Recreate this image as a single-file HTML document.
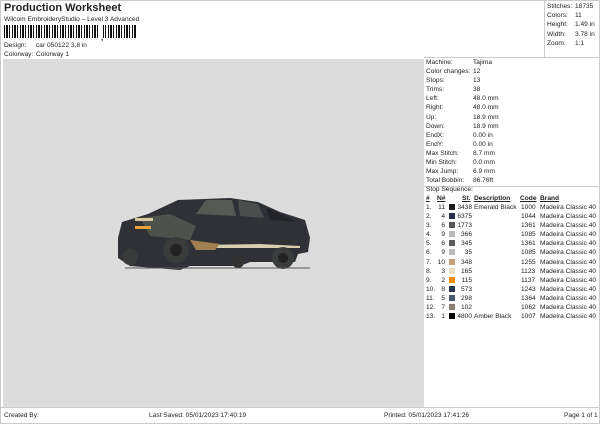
<!DOCTYPE html>
<html><head><meta charset="utf-8"><style>
*{margin:0;padding:0;box-sizing:border-box}
body{width:600px;height:424px;background:#fff;font-family:"Liberation Sans",sans-serif;font-size:6.6px;color:#222;position:relative;overflow:hidden}
.a{position:absolute;white-space:nowrap;line-height:9px}
.sw{display:inline-block;width:6px;height:6px;vertical-align:-1px}
</style></head><body>
<div style="position:absolute;left:0;top:0;width:600px;height:424px;border:1px solid #ccc"></div>
<div class="a" style="left:4px;top:2px;font-size:11px;font-weight:bold;line-height:12px">Production Worksheet</div>
<div class="a" style="left:4px;top:15px">Wilcom EmbroideryStudio – Level 3 Advanced</div>
<div class="a" style="left:4px;top:25px;width:133px;height:13px;background:repeating-linear-gradient(90deg,#111 0 1px,#fff 1px 2px,#111 2px 4px,#fff 4px 5px,#111 5px 6px,#fff 6px 8px)"></div>
<div class="a" style="left:100px;top:25px;width:3px;height:13px;background:#fff"></div>
<div class="a" style="left:101px;top:33px;font-weight:bold;font-size:8px">,</div>
<div class="a" style="left:4px;top:41px">Design:</div><div class="a" style="left:36px;top:41px">car 050122 3,8 in</div>
<div class="a" style="left:4px;top:50px">Colorway:</div><div class="a" style="left:36px;top:50px">Colorway 1</div>
<div style="position:absolute;left:3px;top:59px;width:421px;height:348px;background:#dcdcdc"></div>
<div style="position:absolute;left:424px;top:57px;width:176px;height:1px;background:#ccc"></div>
<div style="position:absolute;left:544px;top:0;width:1px;height:57px;background:#ccc"></div>
<div style="position:absolute;left:0;top:407px;width:600px;height:1px;background:#ccc"></div>
<div style="position:absolute;left:424px;top:186px;width:176px;height:1px;background:#ccc"></div>
<div class="a" style="left:547px;top:2px;line-height:9.2px">Stitches:<br>Colors:<br>Height:<br>Width:<br>Zoom:</div>
<div class="a" style="left:575px;top:2px;line-height:9.2px">18735<br>11<br>1.49 in<br>3.78 in<br>1:1</div>
<div class="a" style="left:426px;top:58px;line-height:9.1px">Machine:<br>Color changes:<br>Stops:<br>Trims:<br>Left:<br>Right:<br>Up:<br>Down:<br>EndX:<br>EndY:<br>Max Stitch:<br>Min Stitch:<br>Max Jump:<br>Total Bobbin:<br>Stop Sequence:</div>
<div class="a" style="left:473px;top:58px;line-height:9.1px">Tajima<br>12<br>13<br>38<br>48.0 mm<br>48.0 mm<br>18.9 mm<br>18.9 mm<br>0.00 in<br>0.00 in<br>8.7 mm<br>0.0 mm<br>6.9 mm<br>86.76ft</div>
<div class="a" style="left:426px;top:194px;font-weight:bold;text-decoration:underline">#</div>
<div class="a" style="left:437px;top:194px;font-weight:bold;text-decoration:underline">N#</div>
<div class="a" style="left:462px;top:194px;font-weight:bold;text-decoration:underline">St.</div>
<div class="a" style="left:474px;top:194px;font-weight:bold;text-decoration:underline">Description</div>
<div class="a" style="left:520px;top:194px;font-weight:bold;text-decoration:underline">Code</div>
<div class="a" style="left:540px;top:194px;font-weight:bold;text-decoration:underline">Brand</div>
<div class="a" style="left:426px;top:203px;line-height:9.1px">1.<br>2.<br>3.<br>4.<br>5.<br>6.<br>7.<br>8.<br>9.<br>10.<br>11.<br>12.<br>13.</div>
<div class="a" style="left:436px;top:203px;line-height:9.1px;text-align:right;width:9px">11<br>4<br>6<br>9<br>6<br>9<br>10<br>3<br>2<br>8<br>5<br>7<br>1</div>
<div class="a" style="left:449px;top:203px;line-height:9.1px">
<span class="sw" style="background:#1a1a1a"></span><br><span class="sw" style="background:#2a2d40"></span><br><span class="sw" style="background:#555"></span><br><span class="sw" style="background:#bbb"></span><br><span class="sw" style="background:#5a5a5a"></span><br><span class="sw" style="background:#bbb"></span><br><span class="sw" style="background:#c8a078"></span><br><span class="sw" style="background:#ece0c4"></span><br><span class="sw" style="background:#f08c10"></span><br><span class="sw" style="background:#2a3550"></span><br><span class="sw" style="background:#4a5a70"></span><br><span class="sw" style="background:#8a8070"></span><br><span class="sw" style="background:#000"></span></div>
<div class="a" style="left:456px;top:203px;line-height:9.1px;text-align:right;width:16px">3438<br>6375<br>1773<br>366<br>345<br>35<br>348<br>165<br>115<br>573<br>298<br>102<br>4800</div>
<div class="a" style="left:474px;top:203px;line-height:9.1px">Emerald Black<br><br><br><br><br><br><br><br><br><br><br><br>Amber Black</div>
<div class="a" style="left:521px;top:203px;line-height:9.1px">1000<br>1044<br>1361<br>1085<br>1361<br>1085<br>1255<br>1123<br>1137<br>1243<br>1364<br>1062<br>1007</div>
<div class="a" style="left:540px;top:203px;line-height:9.1px">Madeira Classic 40<br>Madeira Classic 40<br>Madeira Classic 40<br>Madeira Classic 40<br>Madeira Classic 40<br>Madeira Classic 40<br>Madeira Classic 40<br>Madeira Classic 40<br>Madeira Classic 40<br>Madeira Classic 40<br>Madeira Classic 40<br>Madeira Classic 40<br>Madeira Classic 40</div>
<svg style="position:absolute;left:0;top:0" width="600" height="424">
<path d="M118,238 L122,222 L148,214 L178,200 L230,198 L258,202 L280,212 L305,220 L310,238 L308,252 L298,254 L295,262 L250,262 L240,266 L190,266 L180,270 L130,266 L118,258 Z" fill="#2f3136"/>
<path d="M196,214 L206,200 L232,200 L236,216 Z" fill="#555a55"/>
<path d="M238,200 L258,204 L264,218 L240,216 Z" fill="#4a4e4c"/>
<path d="M266,208 L282,214 L296,222 L270,220 Z" fill="#222428"/>
<path d="M140,218 L170,214 L196,226 L190,240 L150,236 Z" fill="#4d524d"/>
<rect x="135" y="218" width="18" height="3" fill="#d9c9a0"/>
<rect x="135" y="226" width="16" height="3" fill="#e8a040"/>
<path d="M200,245 L260,244 L300,246 L300,248 L200,248 Z" fill="#d8cfb0"/>
<path d="M190,240 L196,250 L215,250 L220,244 Z" fill="#a08050"/>
<circle cx="176" cy="250" r="13" fill="#3a3c3c"/><circle cx="176" cy="250" r="6" fill="#222"/>
<circle cx="283" cy="258" r="11" fill="#3a3c3c"/><circle cx="283" cy="258" r="5" fill="#222"/>
<circle cx="130" cy="257" r="8" fill="#3a3c3c"/>
<circle cx="238" cy="262" r="6" fill="#333"/>
<path d="M125,268 L310,268" stroke="#555" stroke-width="1"/>
</svg>
<div class="a" style="left:4px;top:411px">Created By:</div>
<div class="a" style="left:149px;top:411px">Last Saved: 05/01/2023 17:40:19</div>
<div class="a" style="left:384px;top:411px">Printed: 05/01/2023 17:41:26</div>
<div class="a" style="left:564px;top:411px">Page 1 of 1</div>
</body></html>
